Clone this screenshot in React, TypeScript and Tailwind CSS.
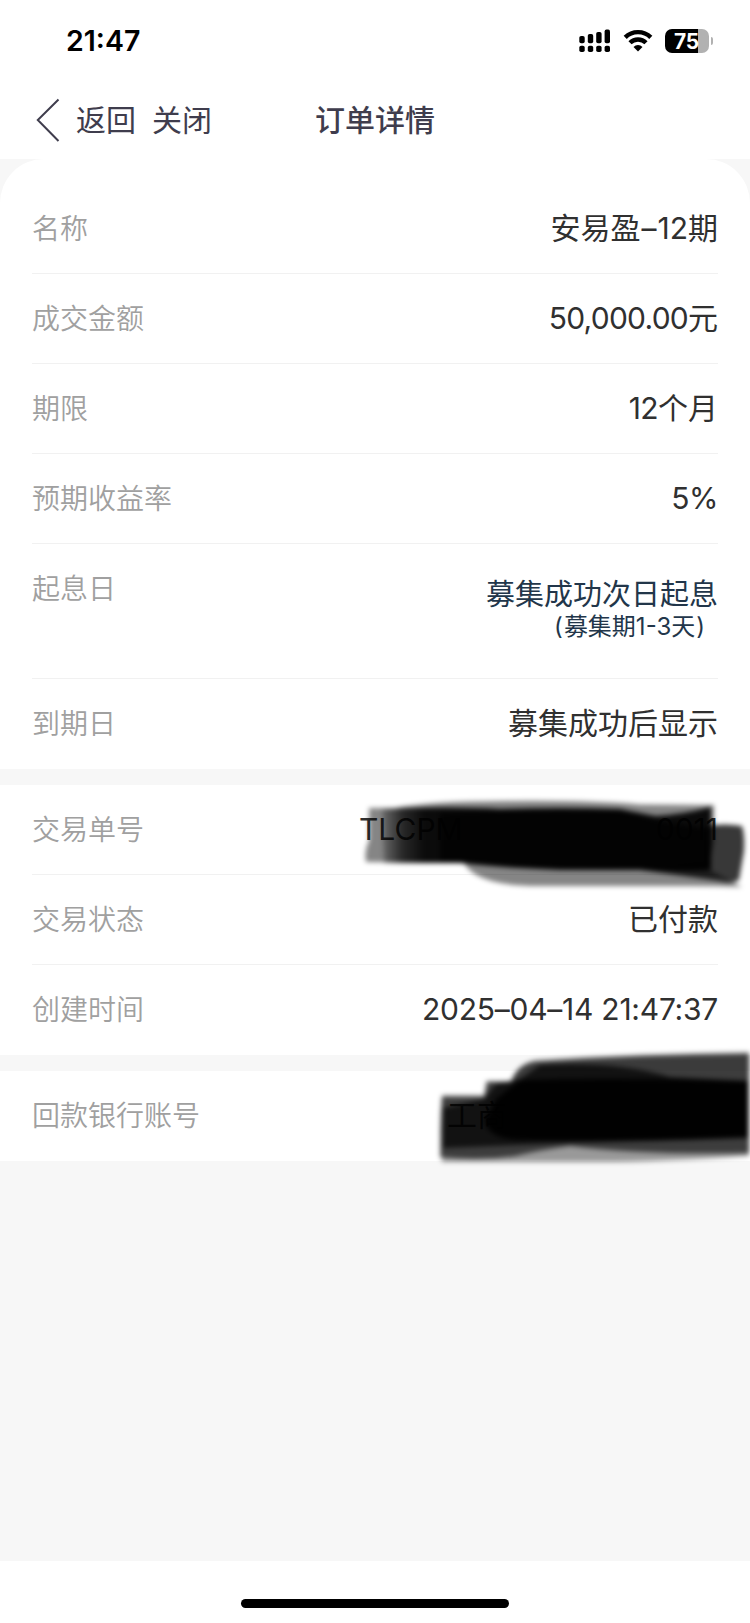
import React from 'react';

interface RowProps {
  label: string;
  last?: boolean;
  tall?: boolean;
  children: React.ReactNode;
}

function Row({ label, last = false, tall = false, children }: RowProps) {
  return (
    <div
      className={`mx-8 flex justify-between ${tall ? 'h-[135px]' : 'h-[90px]'} ${
        last ? '' : 'border-b border-[#f1f1f1]'
      }`}
    >
      <span className="h-[90px] text-[28px] leading-[91px] font-[350] text-[#a0a0a0]">{label}</span>
      {children}
    </div>
  );
}

function Value({ children, className = '' }: { children: React.ReactNode; className?: string }) {
  return (
    <span className={`text-[30px] leading-[89px] font-[380] whitespace-pre text-[#303030] ${className}`}>
      {children}
    </span>
  );
}

function SignalIcon() {
  return (
    <svg width="32" height="24" viewBox="0 0 32 24" fill="#000">
      <rect x="0.3" y="7" width="5.4" height="7.2" rx="1.8" />
      <rect x="8.8" y="5" width="5.4" height="9.2" rx="1.8" />
      <rect x="17.2" y="3" width="5.4" height="11.2" rx="1.8" />
      <rect x="25.6" y="0.6" width="5.4" height="13.6" rx="1.8" />
      <rect x="0.3" y="16.8" width="5.4" height="6.2" rx="1.8" />
      <rect x="8.8" y="16.8" width="5.4" height="6.2" rx="1.8" />
      <rect x="17.2" y="16.8" width="5.4" height="6.2" rx="1.8" />
      <rect x="25.6" y="16.8" width="5.4" height="6.2" rx="1.8" />
    </svg>
  );
}

function WifiIcon() {
  return (
    <svg width="30" height="24" viewBox="0 0 30 24" fill="none" stroke="#000" strokeWidth="4.4">
      <path d="M2.2 8.4a18.2 18.2 0 0 1 25.6 0" />
      <path d="M7 13.8a11.3 11.3 0 0 1 16 0" />
      <path d="M15 22.6l-4.500-4.600a6.300 6.300 0 0 1 9 0z" fill="#000" stroke="none" />
    </svg>
  );
}

function Battery() {
  return (
    <div className="flex items-center gap-[1.5px]">
      <div className="flex h-[24px] w-[44px] items-center justify-center rounded-[7px] bg-linear-to-r from-black from-75% to-[#b1b1b1] to-75%">
        <span className="pr-[1px] text-[21px] leading-none font-bold tracking-[-0.2px] text-white">75</span>
      </div>
      <div className="h-[8px] w-[2.5px] rounded-r-full bg-[#b1b1b1]" />
    </div>
  );
}

function OrderMask() {
  return (
    <svg
      className="absolute top-[6px] left-[350px]"
      width="400"
      height="110"
      viewBox="350 790 400 110"
      fill="#000"
    >
      <defs>
        <filter id="soft-a" x="-10%" y="-20%" width="120%" height="140%">
          <feGaussianBlur stdDeviation="2.8" />
        </filter>
        <linearGradient id="fade-a" gradientUnits="userSpaceOnUse" x1="380" y1="0" x2="425" y2="0">
          <stop offset="0" stopOpacity="0.15" />
          <stop offset="0.5" stopOpacity="0.7" />
          <stop offset="1" stopOpacity="0.92" />
        </linearGradient>
      </defs>
      <g filter="url(#soft-a)">
        <path
          opacity="0.48"
          d="M369 807H395Q430 800 500 800Q590 799 640 803.500L714 804V842L708 868L742 886Q715 885 690 885H530Q475 883 464 862L366 861Q364 850 369 840Z"
        />
        <path
          fill="url(#fade-a)"
          d="M382 808Q450 805 500 808Q560 806 620 808Q640 812 656 815Q680 814 711 806V869Q690 871 640 869H560Q500 867 462 862H384Z"
        />
        <path
          opacity="0.75"
          d="M440 812L500 810H620L660 820L708 828L709 864Q640 871 560 868L440 861Z"
        />
        <path
          opacity="0.78"
          d="M706 825Q725 822 742 825Q745 834 744 850L739 879Q733 883 720 880L640 869L706 862Z"
        />
      </g>
    </svg>
  );
}

function AccountMask() {
  return (
    <svg
      className="absolute top-[-30px] left-[420px]"
      width="330"
      height="140"
      viewBox="420 1040 330 140"
      fill="#000"
    >
      <defs>
        <filter id="soft-b" x="-10%" y="-20%" width="120%" height="140%">
          <feGaussianBlur stdDeviation="2.8" />
        </filter>
      </defs>
      <g filter="url(#soft-b)">
        <path
          opacity="0.4"
          d="M442 1094H484L486 1080H511Q517 1063 535 1059Q640 1052 749 1051V1155Q660 1161 600 1161H442Q438 1130 442 1094Z"
        />
        <path
          opacity="0.6"
          d="M442 1096H484L488 1081H511Q517 1064 535 1061Q640 1054 749 1053V1152Q640 1154 570 1145Q540 1149 515 1155Q480 1160 440 1156Z"
        />
        <path
          opacity="0.7"
          d="M443 1107L484 1098L496 1083L520 1078L540 1064Q620 1060 670 1076L748 1080V1137L570 1142L443 1147Z"
        />
        <path opacity="0.95" d="M496 1098L520 1079Q620 1076 747 1080V1136Q640 1142 520 1139Q486 1138 485 1118Z" />
      </g>
    </svg>
  );
}

export default function App() {
  return (
    <div className="flex h-[1623px] w-[750px] flex-col overflow-hidden bg-[#f7f7f7] font-['Inter','Noto_Sans_CJK_SC',sans-serif]">
      <header className="h-[159px] bg-white">
        <div className="flex h-[80px] items-center justify-between pr-[37px] pl-[66px]">
          <span className="pt-[3px] text-[28.5px] font-semibold text-black">21:47</span>
          <div className="flex items-center gap-[12px] pt-[2px]">
            <SignalIcon />
            <WifiIcon />
            <Battery />
          </div>
        </div>
        <nav className="grid h-[79px] grid-cols-3 items-center text-[30px] text-[#3f3d4d]">
          <div className="flex items-center pl-[36px] whitespace-nowrap">
            <svg width="24" height="44" viewBox="0 0 24 44" fill="none" stroke="#3f3d4d" strokeWidth="2">
              <path d="M22.500 1.500L1.800 22L22.500 43" />
            </svg>
            <span className="ml-[16px] pt-[2px]">返回</span>
            <span className="ml-[16px] pt-[2px]">关闭</span>
          </div>
          <h1 className="pt-[2px] text-center font-medium">订单详情</h1>
        </nav>
      </header>

      <main className="flex flex-1 flex-col gap-4">
        <section className="rounded-t-[44px] bg-white pt-[25px]">
          <Row label="名称">
            <Value>
              安易盈<span className="mx-[1px]">–</span>12期
            </Value>
          </Row>
          <Row label="成交金额">
            <Value>
              <span className="tracking-[-0.75px]">50,000.00</span>元
            </Value>
          </Row>
          <Row label="期限">
            <Value>
              <span className="tracking-[-0.6px]">12</span>个月
            </Value>
          </Row>
          <Row label="预期收益率">
            <Value className="tracking-[-0.5px]">5%</Value>
          </Row>
          <Row label="起息日" tall>
            <div className="pt-[34px] text-right font-[380] text-[#22364a]">
              <p className="text-[29px] leading-[34px]">募集成功次日起息</p>
              <p className="pr-[13px] text-[24px] leading-[29px]">
                <span className="mr-[1px]">(</span>募集期1-3天<span className="ml-[1px]">)</span>
              </p>
            </div>
          </Row>
          <Row label="到期日" last>
            <Value>募集成功后显示</Value>
          </Row>
        </section>

        <section className="relative bg-white">
          <Row label="交易单号">
            <div className="flex w-[359px] justify-between">
              <Value>TLCPM</Value>
              <Value>0011</Value>
            </div>
          </Row>
          <Row label="交易状态">
            <Value>已付款</Value>
          </Row>
          <Row label="创建时间" last>
            <Value className="tracking-[-0.25px]">2025–04–14 21:47:37</Value>
          </Row>
          <OrderMask />
        </section>

        <section className="relative bg-white">
          <Row label="回款银行账号" last>
            <div className="w-[271px]">
              <Value>工商</Value>
            </div>
          </Row>
          <AccountMask />
        </section>
      </main>

      <footer className="flex h-[62px] justify-center bg-white pt-[38px]">
        <div className="h-[9px] w-[268px] rounded-full bg-black" />
      </footer>
    </div>
  );
}
